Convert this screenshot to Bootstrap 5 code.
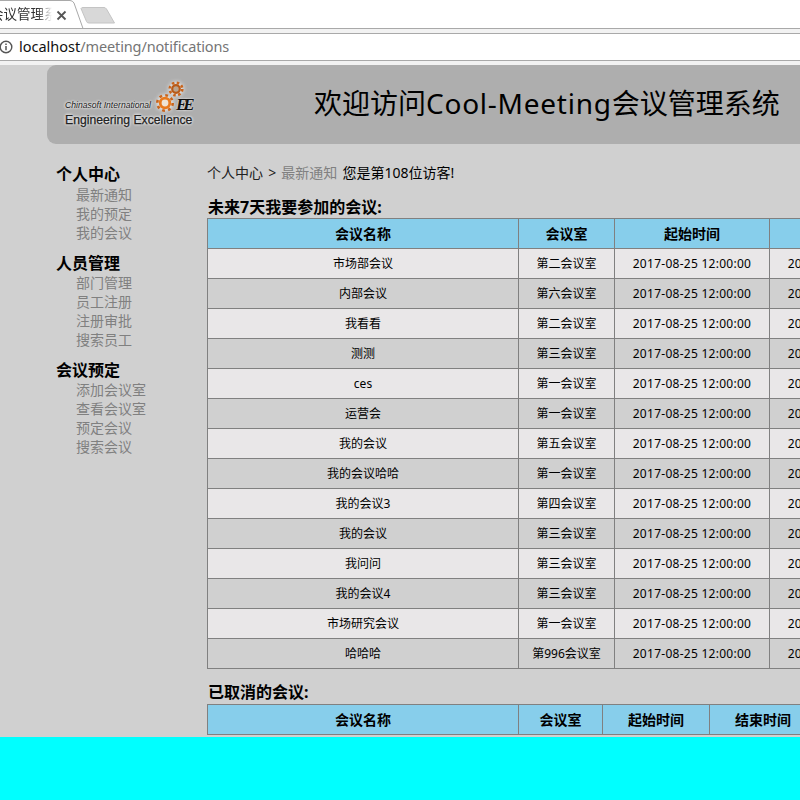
<!DOCTYPE html>
<html lang="zh">
<head>
<meta charset="utf-8">
<title>Cool-Meeting</title>
<link href="https://cdn.jsdelivr.net/npm/bootstrap@5.3.0/dist/css/bootstrap.min.css" rel="stylesheet">
<style>
html,body{height:800px;overflow:hidden;}
body{background:#00ffff;font-family:"Noto Sans","Noto Sans CJK SC",sans-serif;color:#000;margin:0;width:800px;}
.tabbar{height:29px;background:#fff;border-bottom:1px solid #a9a9a9;position:relative;}
.tabshape{position:absolute;left:0;top:0;}
.tabtitle{font-size:13.500px;line-height:15px;color:#333;width:52px;overflow:hidden;white-space:nowrap;text-indent:-10px;padding-top:7px;-webkit-mask-image:linear-gradient(90deg,#000 72%,transparent);mask-image:linear-gradient(90deg,#000 72%,transparent);position:relative;}
.tabclose{position:absolute;left:56px;top:10px;}
.addrwrap{background:#f2f2f2;padding-top:4px;}
.addrbar{height:28px;background:#fff;border-top:1px solid #a9a9a9;border-bottom:1px solid #a9a9a9;gap:5px;font-size:14.500px;font-family:"Noto Sans",sans-serif;}
.addrhost{color:#111;}.addrpath{color:#757575;letter-spacing:-.13px;}
.stripe{height:4px;background:#f2f2f2;}
.pagearea{height:672px;background:#d0d0d0;overflow:hidden;}
.hero{margin-left:47px;width:800px;height:79px;background:#aeaeae;border-bottom-left-radius:9px;border-top-left-radius:9px;position:relative;}
.logoa{position:absolute;left:18px;top:35px;font:italic 8.600px/10px "Liberation Sans",sans-serif;color:#222;text-shadow:0 0 3px #fff,0 0 3px #fff;white-space:nowrap;}
.logob{position:absolute;left:18px;top:47px;font:12.200px/16px "Liberation Sans",sans-serif;color:#222;-webkit-text-stroke:.25px #222;text-shadow:0 0 3px #fff,0 0 3px #fff;white-space:nowrap;}
.logoe{position:absolute;left:129px;top:31px;font:italic bold 17px/17px "Liberation Serif",serif;color:#111;letter-spacing:-4px;text-shadow:0 0 2px #fff;}
.loggear{position:absolute;left:108px;top:15px;filter:drop-shadow(0 0 2px #fff);}
.herotitle{position:absolute;left:267px;top:19px;font-size:28px;line-height:38px;margin:0;font-weight:400;white-space:nowrap;color:#000;}
.latinwide{letter-spacing:.75px;}
.mainwrap{width:1000px;padding-top:19px;}
.sidecol{width:207px;flex:none;padding-left:56px;}
.sidehead{font-size:16px;line-height:22px;font-weight:700;margin:0;}
.sidelist{margin:0 0 9.600px;padding:0 0 0 20px;list-style:none;font-size:14px;line-height:19px;color:#808080;}
.sidelist:not(:first-of-type){margin-top:-1px;margin-bottom:10.600px;}
.contentcol{flex:none;width:793px;}
.crumb{font-size:14px;line-height:20px;margin:0 0 13px;color:#222;word-spacing:1.500px;}
.crumbcur{color:#808080;}
.crumbvisit{color:#000;}
.sechead{font-size:16px;line-height:22px;font-weight:700;margin:0 0 0 1px;}
.dtable{border-collapse:collapse;table-layout:fixed;font-size:12px;text-align:center;}
.dtable th,.dtable td{border:1px solid #808080;height:30px;padding:1px 0 0;line-height:16px;}
.dtable th{background:#87ceeb;font-size:14px;font-weight:700;}
.dtable td:nth-child(n+3){letter-spacing:.27px;}
.dtable tr:nth-child(odd) td{background:#e9e7e8;}
.dtable tr:nth-child(even) td{background:#d0d0d0;}
.w1{width:311px}.w2{width:96px}.w3{width:155px}.w4{width:155px}
.v2{width:84px}.v3{width:107px}.v4{width:107px}.v5{width:107px}
.secondgap{margin-top:12px;margin-bottom:1px;}
</style>
</head>
<body>
<div class="tabbar">
  <svg class="tabshape" width="130" height="30" viewBox="0 0 130 30">
    <path d="M0 0.5H70Q72.500 0.500 74 3L83 28.500H130" fill="none" stroke="#a9a9a9"/>
    <path d="M81 8.500Q81.500 7.500 83 7.500H104Q105.500 7.500 106.500 9L114.500 23H89Q87 23 86.500 21.500Z" fill="#d8d8d8" stroke="#c4c4c4"/>
  </svg>
  <div class="tabtitle">会议管理系统</div>
  <svg class="tabclose" width="11" height="11" viewBox="0 0 11 11"><path d="M1.500 1.500L9.500 9.500M9.500 1.500L1.500 9.500" stroke="#555" stroke-width="1.800"/></svg>
</div>
<div class="addrwrap">
<div class="addrbar d-flex align-items-center">
  <svg width="14" height="14" viewBox="0 0 14 14"><circle cx="6" cy="7" r="5.800" fill="none" stroke="#555" stroke-width="1.400"/><path d="M6 6v4.200M6 3.400v1.500" stroke="#555" stroke-width="1.500"/></svg>
  <div><span class="addrhost">localhost</span><span class="addrpath">/meeting/notifications</span></div>
</div>
</div>
<div class="stripe"></div>
<div class="pagearea">
  <div class="hero">
    <span class="logoa">Chinasoft International</span>
    <span class="logob">Engineering Excellence</span>
    <svg class="loggear" width="40" height="34" viewBox="0 0 40 34">
      <g fill="none" stroke="#c9641c" stroke-width="2.600"><circle cx="21" cy="9" r="6.300" stroke-dasharray="2.500 2.450"/><circle cx="10" cy="23" r="7.700" stroke-dasharray="2.800 3.250"/></g>
      <circle cx="21" cy="9" r="3.800" fill="#b9a48f" stroke="#b85a18" stroke-width="2.200"/>
      <circle cx="10" cy="23" r="4.800" fill="#efe3d4" stroke="#e8791d" stroke-width="2.800"/>
    </svg>
    <span class="logoe">EE</span>
    <h1 class="herotitle">欢迎访问<span class="latinwide">Cool-Meeting</span>会议管理系统</h1>
  </div>
  <div class="mainwrap d-flex">
    <nav class="sidecol">
      <h2 class="sidehead">个人中心</h2>
      <ul class="sidelist"><li>最新通知</li><li>我的预定</li><li>我的会议</li></ul>
      <h2 class="sidehead">人员管理</h2>
      <ul class="sidelist"><li>部门管理</li><li>员工注册</li><li>注册审批</li><li>搜索员工</li></ul>
      <h2 class="sidehead">会议预定</h2>
      <ul class="sidelist"><li>添加会议室</li><li>查看会议室</li><li>预定会议</li><li>搜索会议</li></ul>
    </nav>
    <main class="contentcol">
      <p class="crumb">个人中心 &gt; <span class="crumbcur">最新通知</span> <span class="crumbvisit">您是第108位访客!</span></p>
      <h3 class="sechead">未来7天我要参加的会议:</h3>
      <table class="dtable">
        <thead><tr><th class="w1">会议名称</th><th class="w2">会议室</th><th class="w3">起始时间</th><th class="w4">结束时间</th></tr></thead>
        <tbody>
          <tr><td>市场部会议</td><td>第二会议室</td><td>2017-08-25 12:00:00</td><td>2017-08-25 14:00:00</td></tr>
          <tr><td>内部会议</td><td>第六会议室</td><td>2017-08-25 12:00:00</td><td>2017-08-25 14:00:00</td></tr>
          <tr><td>我看看</td><td>第二会议室</td><td>2017-08-25 12:00:00</td><td>2017-08-25 14:00:00</td></tr>
          <tr><td>测测</td><td>第三会议室</td><td>2017-08-25 12:00:00</td><td>2017-08-25 14:00:00</td></tr>
          <tr><td>ces</td><td>第一会议室</td><td>2017-08-25 12:00:00</td><td>2017-08-25 14:00:00</td></tr>
          <tr><td>运营会</td><td>第一会议室</td><td>2017-08-25 12:00:00</td><td>2017-08-25 14:00:00</td></tr>
          <tr><td>我的会议</td><td>第五会议室</td><td>2017-08-25 12:00:00</td><td>2017-08-25 14:00:00</td></tr>
          <tr><td>我的会议哈哈</td><td>第一会议室</td><td>2017-08-25 12:00:00</td><td>2017-08-25 14:00:00</td></tr>
          <tr><td>我的会议3</td><td>第四会议室</td><td>2017-08-25 12:00:00</td><td>2017-08-25 14:00:00</td></tr>
          <tr><td>我的会议</td><td>第三会议室</td><td>2017-08-25 12:00:00</td><td>2017-08-25 14:00:00</td></tr>
          <tr><td>我问问</td><td>第三会议室</td><td>2017-08-25 12:00:00</td><td>2017-08-25 14:00:00</td></tr>
          <tr><td>我的会议4</td><td>第三会议室</td><td>2017-08-25 12:00:00</td><td>2017-08-25 14:00:00</td></tr>
          <tr><td>市场研究会议</td><td>第一会议室</td><td>2017-08-25 12:00:00</td><td>2017-08-25 14:00:00</td></tr>
          <tr><td>哈哈哈</td><td>第996会议室</td><td>2017-08-25 12:00:00</td><td>2017-08-25 14:00:00</td></tr>
        </tbody>
      </table>
      <h3 class="sechead secondgap">已取消的会议:</h3>
      <table class="dtable">
        <thead><tr><th class="w1">会议名称</th><th class="v2">会议室</th><th class="v3">起始时间</th><th class="v4">结束时间</th><th class="v5">取消原因</th></tr></thead>
      </table>
    </main>
  </div>
</div>
</body>
</html>
